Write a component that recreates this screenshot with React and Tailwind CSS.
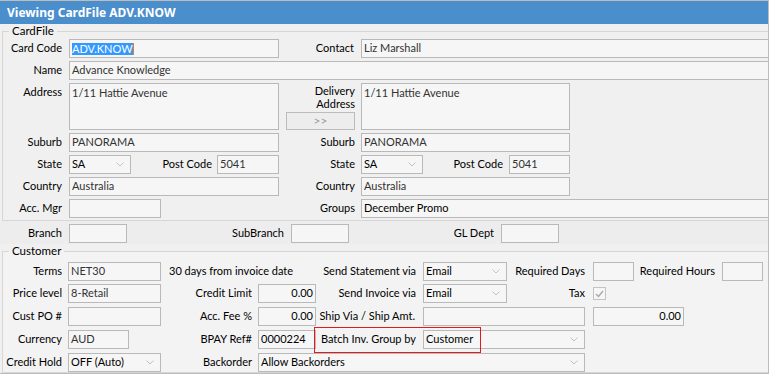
import React from "react";

const inputCls =
  "h-[19px] shrink-0 border border-[#b9b9b9] bg-[#f6f6f6] text-[#333] px-[2px] flex items-center overflow-hidden whitespace-nowrap";

const Label = ({ className, children }) => (
  <span className={"shrink-0 text-right whitespace-nowrap " + className}>{children}</span>
);

const Input = ({ className, children }) => (
  <div className={inputCls + " " + className}>{children}</div>
);

const Chevron = () => (
  <svg width="8" height="5" viewBox="0 0 8 5" className="shrink-0 mr-[4px]">
    <polyline points="0.5,0.5 4,4 7.5,0.5" fill="none" stroke="#c2c2c2" strokeWidth="1" />
  </svg>
);

const Select = ({ className, children }) => (
  <div className={inputCls + " justify-between " + className}>
    <span className="text-black">{children}</span>
    <Chevron />
  </div>
);

const Check = () => (
  <div className="w-[13px] h-[13px] shrink-0 border border-[#c4c4c4] bg-[#f6f6f6] flex items-center justify-center">
    <svg width="9" height="8" viewBox="0 0 9 8">
      <polyline points="1,4 3.5,6.5 8,1" fill="none" stroke="#a9a9a9" strokeWidth="1.4" />
    </svg>
  </div>
);

export default function App() {
  return (
    <div className="w-[769px] h-[374px] overflow-hidden bg-[#f0f0f0] border-t border-r border-b border-[#bdbdbd] text-[11px] text-black font-['Lato',sans-serif]">
      {/* Title bar */}
      <div className="h-[23px] bg-[#4b8ecc] text-white font-bold text-[12px] pl-[7px] flex items-center font-['Noto_Sans',sans-serif]">
        Viewing CardFile ADV.KNOW
      </div>

      {/* CardFile group */}
      <fieldset className="ml-[2px] w-[800px] border border-[#d6d6d6] pt-[1px] pb-[2px]">
        <legend className="ml-[6px] px-[3px] leading-[14px] text-[11.5px]">CardFile</legend>
        <div className="flex flex-col gap-[3px]">
          <div className="flex items-center h-[19px]">
            <Label className="w-[59px]">Card Code</Label>
            <Input className="ml-[7px] w-[210px]">
              <span className="bg-[#3399ff] text-white leading-[12px]">ADV.KNOW</span>
              <span className="w-[1px] h-[12px] bg-[#f07a1a]" />
            </Input>
            <Label className="w-[75px]">Contact</Label>
            <Input className="ml-[7px] w-[430px]">Liz Marshall</Input>
          </div>
          <div className="flex items-center h-[19px]">
            <Label className="w-[59px]">Name</Label>
            <Input className="ml-[7px] w-[720px]">Advance Knowledge</Input>
          </div>
          <div className="flex items-start h-[47px]">
            <Label className="w-[59px] pt-[1px]">Address</Label>
            <div className="ml-[7px] w-[210px] h-[47px] shrink-0 border border-[#b9b9b9] bg-[#f6f6f6] text-[#333] px-[2px] pt-[1px]">
              1/11 Hattie Avenue
            </div>
            <div className="w-[76px] h-[47px] shrink-0 flex flex-col justify-between items-end">
              <span className="text-right leading-[13px] pt-[1px]">
                Delivery
                <br />
                Address
              </span>
              <div className="w-[69px] h-[18px] border border-[#bcbcbc] bg-[#ededed] text-[#9c9c9c] text-[12px] flex items-center justify-center">
                &gt;&gt;
              </div>
            </div>
            <div className="ml-[6px] w-[209px] h-[47px] shrink-0 border border-[#b9b9b9] bg-[#f6f6f6] text-[#333] px-[2px] pt-[1px]">
              1/11 Hattie Avenue
            </div>
          </div>
          <div className="flex items-center h-[19px]">
            <Label className="w-[59px]">Suburb</Label>
            <Input className="ml-[7px] w-[210px]">PANORAMA</Input>
            <Label className="w-[76px]">Suburb</Label>
            <Input className="ml-[6px] w-[209px]">PANORAMA</Input>
          </div>
          <div className="flex items-center h-[19px]">
            <Label className="w-[59px]">State</Label>
            <Select className="ml-[7px] w-[62px]">SA</Select>
            <Label className="w-[81px]">Post Code</Label>
            <Input className="ml-[5px] w-[62px]">5041</Input>
            <Label className="w-[76px]">State</Label>
            <Select className="ml-[6px] w-[62px]">SA</Select>
            <Label className="w-[80px]">Post Code</Label>
            <Input className="ml-[6px] w-[61px]">5041</Input>
          </div>
          <div className="flex items-center h-[19px]">
            <Label className="w-[59px]">Country</Label>
            <Input className="ml-[7px] w-[210px]">Australia</Input>
            <Label className="w-[76px]">Country</Label>
            <Input className="ml-[6px] w-[209px]">Australia</Input>
          </div>
          <div className="flex items-center h-[19px]">
            <Label className="w-[59px]">Acc. Mgr</Label>
            <Input className="ml-[7px] w-[92px]" />
            <Label className="w-[194px]">Groups</Label>
            <Input className="ml-[6px] w-[420px] text-black">December Promo</Input>
          </div>
        </div>
      </fieldset>

      {/* Branch band */}
      <div className="bg-[#ededed] pt-[3px] pb-[1px]">
        <div className="flex items-center h-[19px]">
          <Label className="w-[62px]">Branch</Label>
          <Input className="ml-[7px] w-[58px]" />
          <Label className="w-[157px]">SubBranch</Label>
          <Input className="ml-[7px] w-[58px]" />
          <Label className="w-[145px]">GL Dept</Label>
          <Input className="ml-[7px] w-[58px]" />
        </div>
      </div>

      {/* Customer group */}
      <fieldset className="ml-[2px] w-[800px] border border-[#d6d6d6] pt-[4px] bg-[#f3f3f3]">
        <legend className="ml-[6px] px-[3px] leading-[14px] text-[11.5px]">Customer</legend>
        <div className="flex items-center h-[19px]">
          <Label className="w-[59px]">Terms</Label>
          <Input className="ml-[6px] w-[93px]">NET30</Input>
          <div className="w-[255px] shrink-0 pl-[8px] flex justify-between whitespace-nowrap">
            <span>30 days from invoice date</span>
            <span>Send Statement via</span>
          </div>
          <Select className="ml-[7px] w-[84px]">Email</Select>
          <Label className="w-[78px]">Required Days</Label>
          <Input className="ml-[8px] w-[41px]" />
          <Label className="w-[81px]">Required Hours</Label>
          <Input className="ml-[7px] w-[41px]" />
        </div>
        <div className="flex items-center h-[19px] mt-[3px]">
          <Label className="w-[59px]">Price level</Label>
          <Input className="ml-[6px] w-[93px]">8-Retail</Input>
          <Label className="w-[91px]">Credit Limit</Label>
          <Input className="ml-[6px] w-[58px] justify-end text-black">0.00</Input>
          <Label className="w-[100px]">Send Invoice via</Label>
          <Select className="ml-[7px] w-[84px]">Email</Select>
          <Label className="w-[78px]">Tax</Label>
          <div className="ml-[8px]">
            <Check />
          </div>
        </div>
        <div className="flex items-center h-[19px] mt-[4px]">
          <Label className="w-[59px]">Cust PO #</Label>
          <Input className="ml-[6px] w-[93px]" />
          <Label className="w-[91px]">Acc. Fee %</Label>
          <Input className="ml-[6px] w-[58px] justify-end text-black">0.00</Input>
          <Label className="w-[99px]">Ship Via / Ship Amt.</Label>
          <Input className="ml-[8px] w-[162px]" />
          <Input className="ml-[8px] w-[91px] justify-end text-black">0.00</Input>
        </div>
        <div className="relative flex items-center h-[19px] mt-[4px]">
          <Label className="w-[59px]">Currency</Label>
          <Input className="ml-[6px] w-[61px]">AUD</Input>
          <Label className="w-[123px]">BPAY Ref#</Label>
          <Input className="ml-[6px] w-[58px] text-black">0000224</Input>
          <Label className="w-[100px]">Batch Inv. Group by</Label>
          <Select className="ml-[7px] w-[162px]">Customer</Select>
          <div className="absolute left-[311px] top-[-3px] w-[167px] h-[26px] border border-[#e3191c]" />
        </div>
        <div className="flex items-center h-[19px] mt-[4px]">
          <Label className="w-[59px]">Credit Hold</Label>
          <Select className="ml-[6px] w-[93px]">OFF (Auto)</Select>
          <Label className="w-[91px]">Backorder</Label>
          <Select className="ml-[6px] w-[327px]">Allow Backorders</Select>
        </div>
      </fieldset>
    </div>
  );
}
